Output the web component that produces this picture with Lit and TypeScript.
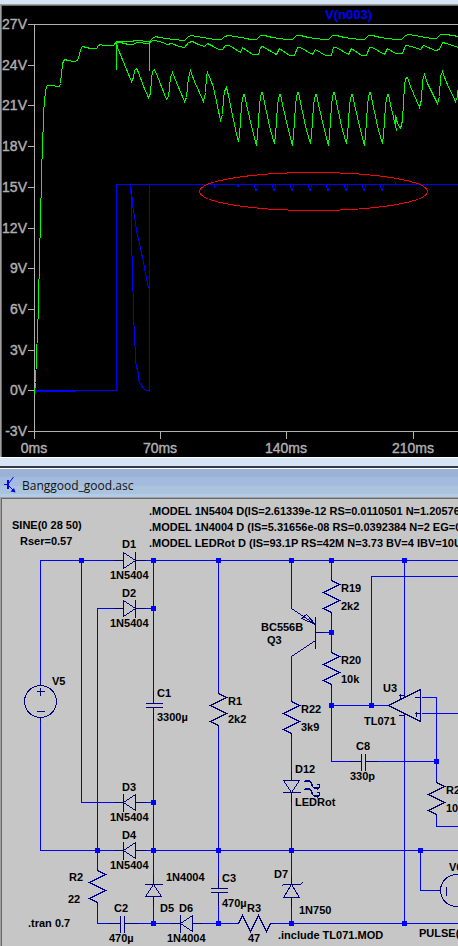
import { LitElement, html, svg, css } from "lit";
import { customElement } from "lit/decorators.js";

type Pt = [number, number];
const pts = (list: Pt[]) => list.map((p) => p.join(",")).join(" ");

/* ---------- waveform data ---------- */

const voltTicks: [string, number][] = [
  ["27V", 24], ["24V", 65], ["21V", 105], ["18V", 146], ["15V", 187], ["12V", 228],
  ["9V", 268], ["6V", 309], ["3V", 350], ["0V", 390], ["-3V", 431],
];
const timeTicks: [string, number][] = [["0ms", 34], ["70ms", 160], ["140ms", 286], ["210ms", 413]];

const startUp: Pt[] = [
  [34, 394], [35, 382], [36, 357], [37, 330], [38, 308], [38, 287], [39, 270], [39, 244], [40, 232], [40, 206],
  [41, 190], [41, 168], [42, 150], [42, 139], [43, 125], [43, 113], [44, 100], [45, 92], [46, 86], [47, 85],
  [54, 85], [55, 86], [59, 86], [60, 83], [61, 73], [62, 64], [63, 60], [65, 59], [67, 60], [74, 61], [77, 60],
  [79, 54], [80, 49], [82, 46], [86, 47], [90, 48], [96, 48], [98, 45], [100, 44], [103, 45], [113, 45], [116, 41],
];

const upper: Pt[] = [
  [116, 41], [130, 41], [136, 40], [149, 41], [152, 38], [155, 36], [159, 37], [173, 39], [184, 40], [188, 36], [191, 35],
  [202, 37], [215, 39], [221, 39], [224, 36], [228, 35], [234, 36], [246, 38], [250, 39], [256, 39], [260, 35], [264, 35],
  [272, 37], [286, 39], [292, 39], [296, 35], [300, 35], [308, 37], [323, 39], [328, 39], [332, 35], [336, 35],
  [344, 37], [359, 39], [364, 39], [368, 35], [372, 35], [380, 37], [395, 39], [401, 39], [405, 35], [408, 34],
  [420, 36], [431, 38], [436, 38], [440, 34], [446, 34], [458, 36],
];

const middle: Pt[] = [
  [116, 42], [120, 42], [128, 44], [132, 44], [137, 42], [148, 43], [152, 40], [155, 40], [162, 42], [167, 44], [171, 43],
  [179, 46], [184, 47], [188, 42], [192, 41], [198, 44], [204, 46], [207, 43], [213, 46], [218, 49], [222, 49],
  [225, 45], [229, 45], [240, 52], [242, 47], [252, 54], [258, 54], [260, 47], [262, 46], [276, 54], [279, 48],
  [289, 55], [294, 55], [297, 47], [300, 47], [312, 54], [315, 49], [325, 55], [331, 55], [333, 47], [336, 47],
  [348, 54], [351, 48], [361, 55], [366, 55], [369, 47], [372, 47], [384, 54], [387, 48], [395, 53], [402, 53],
  [405, 45], [411, 46], [420, 49], [423, 45], [435, 50], [439, 49], [442, 42], [446, 43], [458, 47],
];

/* Full-load ripple repeats every 18 px between 100 ms and 200 ms. */
const ripple: Pt[] = [];
for (let k = 0; k < 9; k++) {
  const x = 238 + 18 * k;
  const low = k === 0 ? 141 : k % 2 ? 145 : 143;
  const high = k % 2 ? 92 : 94;
  ripple.push([x, low], [x + 1, 134], [x + 2, 121], [x + 3, 104], [x + 5, high], [x + 6, high], [x + 8, high + 10], [x + 14, 130]);
}

const lower: Pt[] = [
  [116, 69], [116, 42], [117, 47], [131, 81], [133, 77], [134, 70], [136, 68], [138, 72], [143, 86], [148, 97], [150, 93], [151, 78],
  [152, 71], [154, 69], [157, 76], [166, 99], [168, 96], [170, 77], [172, 72], [176, 82], [184, 101], [186, 97], [188, 77],
  [190, 70], [194, 81], [203, 101], [205, 92], [206, 75], [207, 72], [210, 79], [213, 87], [220, 120], [222, 114], [223, 98],
  [224, 91], [226, 87], [228, 95], [231, 110], [237, 138], ...ripple,
  [395, 124], [395, 115], [397, 123], [400, 128], [402, 120], [403, 102], [404, 86], [405, 78], [407, 77], [410, 86], [419, 107],
  [421, 99], [422, 80], [424, 74], [427, 83], [437, 103], [439, 96], [440, 76], [442, 71], [446, 82], [455, 101],
  [457, 96], [458, 83],
];

const blueTraces: Pt[][] = [
  [[34, 390], [116, 390], [116, 184], [458, 184]],
  [[34, 391], [75, 391]],
  [[130, 184], [130, 192], [131, 194], [131, 255], [132, 256], [132, 291], [133, 292], [133, 325], [134, 326], [134, 345], [135, 346],
    [135, 360], [136, 366], [138, 374], [138, 379], [140, 384], [143, 388], [146, 390], [149, 390], [149, 184]],
  [[131, 188], [132, 205], [134, 216], [136, 230], [139, 243], [143, 262], [146, 278], [148, 288]],
  [[214, 184], [214, 187]],
  [[395, 181], [395, 184]],
];

/* ---------- schematic data ---------- */

const wires: Pt[][] = [
  [[40, 685], [40, 560], [114, 560]], [[144, 560], [458, 560]],
  [[40, 718], [40, 850], [114, 850]], [[144, 850], [458, 850]],
  [[81, 560], [81, 802], [114, 802]], [[144, 802], [153, 802]],
  [[97, 867], [97, 608], [114, 608]], [[144, 608], [153, 608]],
  [[153, 560], [153, 690]], [[153, 720], [153, 875]],
  [[97, 904], [97, 923], [107, 923]], [[136, 923], [171, 923]], [[153, 905], [153, 923]],
  [[201, 923], [235, 923]], [[273, 923], [458, 923]],
  [[218, 560], [218, 690]], [[218, 728], [218, 876]], [[218, 904], [218, 923]],
  [[291, 560], [291, 608]], [[291, 656], [291, 698]], [[291, 736], [291, 771]], [[291, 800], [291, 875]], [[291, 905], [291, 923]],
  [[331, 560], [331, 577]], [[331, 615], [331, 649]], [[323, 632], [331, 632]],
  [[331, 687], [331, 761], [348, 761]], [[377, 761], [436, 761]],
  [[331, 705], [388, 705]], [[371, 705], [371, 576], [458, 576]],
  [[404, 560], [404, 692]], [[404, 718], [404, 923]],
  [[421, 697], [436, 697], [436, 779]], [[421, 713], [458, 713]],
  [[436, 817], [436, 826], [458, 826]],
  [[420, 850], [420, 890], [437, 890]],
];

const nodes: Pt[] = [
  [81, 560], [153, 560], [218, 560], [291, 560], [331, 560], [404, 560], [153, 608], [331, 632], [331, 705],
  [371, 705], [436, 761], [153, 802], [97, 850], [153, 850], [218, 850], [291, 850], [420, 850], [153, 923],
  [218, 923], [291, 923], [404, 923],
];

const resistors: Pt[] = [[218, 693], [331, 580], [331, 652], [291, 701], [436, 782], [97, 870]];
const diodes: [number, number, number][] = [
  [129, 560, 0], [129, 608, 0], [129, 802, 180], [129, 850, 180], [186, 923, 180], [153, 890, 270], [291, 786, 90],
];
const capacitors: [number, number, number][] = [[153, 705, 0], [218, 890, 0], [122, 923, 90], [363, 761, 90]];

const labels: [number, number, string][] = [
  [12, 529, "SINE(0 28 50)"], [20, 545, "Rser=0.57"],
  [149, 515, ".MODEL 1N5404 D(IS=2.61339e-12 RS=0.0110501 N=1.20576"],
  [149, 531, ".MODEL 1N4004 D (IS=5.31656e-08 RS=0.0392384 N=2 EG=0.6"],
  [149, 547, ".MODEL LEDRot D (IS=93.1P RS=42M N=3.73 BV=4 IBV=10U C"],
  [122, 548, "D1"], [110, 579, "1N5404"], [122, 597, "D2"], [110, 627, "1N5404"],
  [122, 791, "D3"], [110, 821, "1N5404"], [122, 839, "D4"], [110, 869, "1N5404"],
  [52, 685, "V5"], [157, 697, "C1"], [157, 721, "3300µ"], [228, 705, "R1"], [228, 723, "2k2"],
  [341, 592, "R19"], [341, 610, "2k2"], [341, 664, "R20"], [341, 683, "10k"],
  [261, 631, "BC556B"], [267, 644, "Q3"], [383, 692, "U3"], [364, 725, "TL071"],
  [301, 713, "R22"], [301, 731, "3k9"], [356, 750, "C8"], [350, 780, "330p"],
  [295, 773, "D12"], [295, 806, "LEDRot"], [446, 794, "R2"], [446, 812, "10"],
  [69, 881, "R2"], [68, 903, "22"], [28, 927, ".tran 0.7"], [114, 912, "C2"], [109, 942, "470µ"],
  [166, 881, "1N4004"], [160, 912, "D5"], [179, 912, "D6"], [167, 942, "1N4004"],
  [222, 882, "C3"], [222, 907, "470µ"], [247, 912, "R3"], [248, 942, "47"],
  [274, 878, "D7"], [299, 914, "1N750"], [278, 939, ".include TL071.MOD"], [449, 871, "V6"], [419, 937, "PULSE("],
];

@customElement("waveform-pane")
class WaveformPane extends LitElement {
  static styles = css`
    :host { display: block; background: #000; overflow: hidden; }
    svg { display: block; width: 100%; height: 451px; }
    .line { fill: none; stroke-width: 1; shape-rendering: crispEdges; }
    .axis { stroke: #b0b0b0; }
    .green { stroke: #0f0; }
    .blue { stroke: #00f; }
    .red { stroke: #f00; }
    text { font: 14px "Liberation Sans", Arial, sans-serif; fill: #b0b0b0; stroke: #b0b0b0; stroke-width: 0.4; }
    .volt { text-anchor: end; }
    .time { text-anchor: middle; }
    .trace { font-size: 13px; font-weight: bold; fill: #00f; stroke: none; }
  `;
  render() {
    return html`<svg role="img" aria-label="Simulated voltages over time">
      <g class="line" transform="translate(-1.5 -5.5)">
        <path class="axis" d="M458 24H34V438M34 431H458" />
        ${voltTicks.map(([, y]) => svg`<path class="axis" d="M27 ${y}H34" />`)}
        ${timeTicks.map(([, x]) => svg`<path class="axis" d="M${x} 431V438" />`)}
        ${blueTraces.map((t) => svg`<polyline class="blue" points=${pts(t)} />`)}
        ${[238, 256, 274, 292, 310, 328, 346, 364, 382].map((x, i) =>
          i === 0
            ? svg`<path class="blue" d="M237 184V186H238V184" />`
            : svg`<path class="blue" d="M${x - 2} 184V187M${x - 1} 187V190H${x}V187M${x + 1} 184V186" />`)}
        ${[startUp, upper, middle, lower].map((t) => svg`<polyline class="green" points=${pts(t)} />`)}
        <path class="green" d="M149 41V70" />
        <ellipse class="red" cx="313" cy="191" rx="114" ry="19" />
      </g>
      <g transform="translate(-2 -6)">
        ${voltTicks.map(([t, y]) => svg`<text class="volt" x="27" y=${y + 5}>${t}</text>`)}
        ${timeTicks.map(([t, x]) => svg`<text class="time" x=${x} y="453">${t}</text>`)}
        <text class="trace" x="325" y="19">V(n003)</text>
      </g>
    </svg>`;
  }
}

@customElement("schematic-pane")
class SchematicPane extends LitElement {
  static styles = css`
    :host { display: block; background: #c6c6c6; overflow: hidden; }
    svg { display: block; width: 100%; height: 447px; }
    .line { fill: none; stroke-width: 1; shape-rendering: crispEdges; }
    .wire { stroke: #00f; }
    .node { fill: #00f; stroke: none; }
    .part { stroke: #000080; }
    text { font: bold 11px "Liberation Sans", Arial, sans-serif; fill: #000; white-space: pre; }
  `;
  render() {
    return html`<svg role="img" aria-label="Power supply schematic">
      <g class="line" transform="translate(-1.5 -498.5)">
        ${wires.map((w) => svg`<polyline class="wire" points=${pts(w)} />`)}
        <g class="part">
          ${resistors.map(([x, y]) => svg`<path transform="translate(${x} ${y})" d="M0 -3V0L8 4L-8 12L8 20L-8 28L0 32V35" />`)}
          <path d="M235 923H238L242 915L250 931L258 915L266 931L270 923H273" />
          ${diodes.map(([x, y, a]) => svg`<path transform="translate(${x} ${y}) rotate(${a})" d="M-16 0H-6M-6 -8V8L6 0ZM6 -9V9M6 0H16" />`)}
          <path d="M291 875V884L283 897H299L291 884M291 897V906M281 886L283 884H300L302 882" />
          ${capacitors.map(([x, y, a]) => svg`<path transform="translate(${x} ${y}) rotate(${a})" d="M0 -15V-2M-8 -2H9M-8 2H9M0 2V15" />`)}
          <circle cx="40" cy="701" r="16" />
          <path d="M40 682V685M40 717V720M36 691H44M40 687V695M36 711H44" />
          <circle cx="456" cy="890" r="16" />
          <path d="M437 890H440M446 886V895" />
          <path d="M291 608L315 624M301 618L306 614L315 624ZM315 616V648M315 632H323M315 640L291 656" />
          <path d="M388 705L420 689V721ZM404 692V697M404 713V718M398 695H403M400 693V698M398 715H403M414 697H419M414 713H419M416 711V716" />
          ${[0, 8].map((dy) => svg`<path transform="translate(0 ${dy})" d="M303 782L305 780H309L311 782V785L313 787H319M304 781H309L312 784V786L314 788H317M316 784H319V787L316 790" />`)}
        </g>
        ${nodes.map(([x, y]) => svg`<path class="node" transform="translate(${x - 2.5} ${y - 2.5})" d="M0 0H5V5H0Z" />`)}
      </g>
      <g transform="translate(-2 -499)">
        ${labels.map(([x, y, t]) => svg`<text x=${x} y=${y}>${t}</text>`)}
      </g>
    </svg>`;
  }
}

@customElement("app-root")
class AppRoot extends LitElement {
  static styles = css`
    :host { display: flex; flex-direction: column; min-height: 100vh; overflow: hidden; background: #c6c6c6; }
    .strip { height: 4px; background: #d5e5f5; }
    .frame { border: 0 solid #a0a0a0; border-width: 1px 0 0 1px; }
    .inset { border: 0 solid #696969; border-width: 1px 0 0 1px; }
    .gap { height: 8px; background: #d5e5f5; border-top: 1px solid #fff; border-bottom: 2px solid #3a3a44; }
    .title {
      display: flex; align-items: center; gap: 6px; height: 28px; padding-left: 3px; border-top: 1px solid #fff;
      background: linear-gradient(#9ab2d6 0 8px, #a3bbdc 8px 17px, #abc3dd 17px 25px, #b0cce8 25px);
    }
    .title svg { flex: none; width: 13px; height: 17px; margin-top: 3px; fill: none; stroke: #00f; }
    .head { fill: #00f; stroke: none; }
    h1 { margin: 6px 0 0; font: 12px/16px "Open Sans", "Noto Sans", sans-serif; color: #111; white-space: nowrap; }
    .grow { flex: 1; }
  `;
  render() {
    return html`
      <div class="strip"></div>
      <div class="frame"><div class="inset"><waveform-pane></waveform-pane></div></div>
      <div class="gap"></div>
      <header class="title">
        <svg viewBox="0 0 13 17" aria-hidden="true">
          <path d="M1 8.500H5M6 7L10.500 1M6 10L11 15" />
          <path d="M5 4V13" stroke-width="2" />
          <path class="head" d="M12.500 16.500L11 12L7.500 15.500Z" />
        </svg>
        <h1>Banggood_good.asc</h1>
      </header>
      <main class="frame grow"><div class="inset"><schematic-pane></schematic-pane></div></main>
    `;
  }
}
